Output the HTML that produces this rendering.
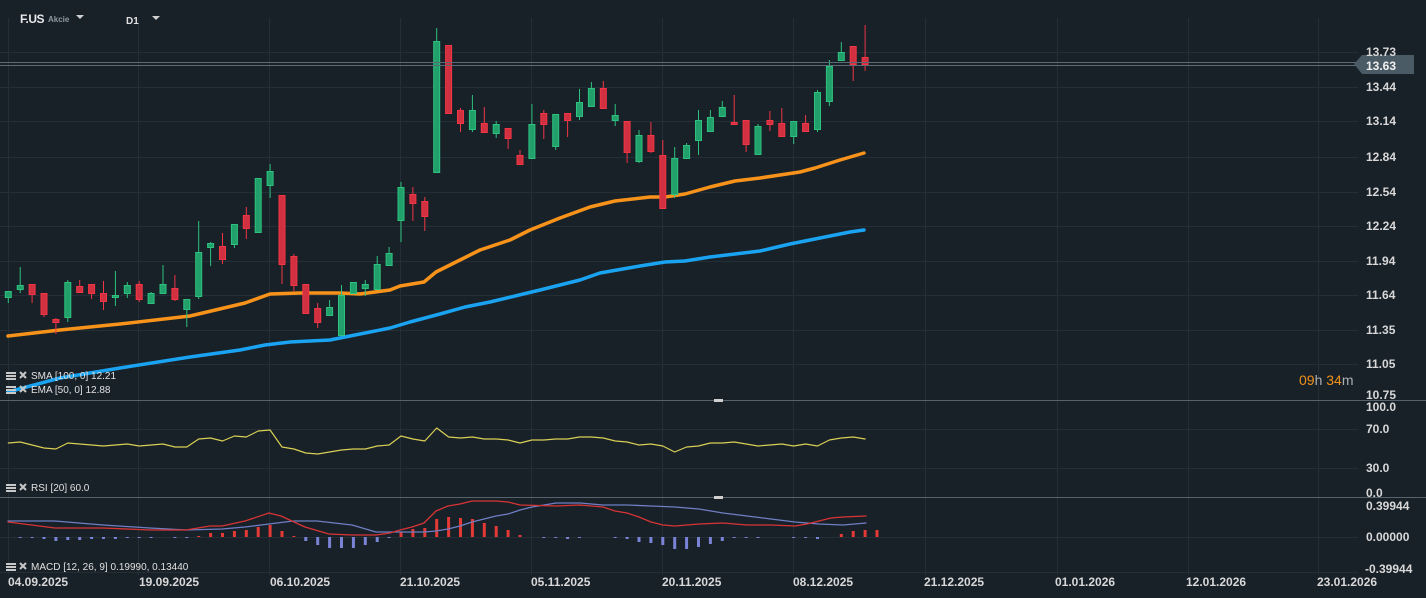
<!DOCTYPE html>
<html><head><meta charset="utf-8"><style>
html,body{margin:0;padding:0;background:#182028;width:1426px;height:598px;overflow:hidden;font-family:"Liberation Sans",Arial,sans-serif}
svg{position:absolute;left:0;top:0}
.t{font-family:"Liberation Sans",Arial,sans-serif}
</style></head><body>
<svg id="s" width="1426" height="598" viewBox="0 0 1426 598" xmlns="http://www.w3.org/2000/svg">
<rect width="1426" height="598" fill="#182028"/>
<g id="grid" stroke="#242e37" stroke-width="1"></g>
<g id="main"></g>
<!-- separators -->
<line x1="0" y1="400.5" x2="1426" y2="400.5" stroke="#56636d"/>
<line x1="0" y1="497.5" x2="1426" y2="497.5" stroke="#56636d"/>
<rect x="714" y="399" width="9" height="3" fill="#d0d0d0"/>
<rect x="714" y="496" width="9" height="3" fill="#d0d0d0"/>
<!-- current price line -->
<line x1="0" y1="62.5" x2="1356" y2="62.5" stroke="#5b6a75"/>
<line x1="0" y1="65.5" x2="1356" y2="65.5" stroke="#5b6a75"/>
<path d="M1354 64 L1362 55 L1414 55 L1414 74 L1362 74 Z" fill="#4a5b66"/>
<text x="1366" y="70" class="t" font-size="12" font-weight="bold" fill="#f0f0f0">13.63</text>
<g class="t" font-size="12" fill="#d8d8d8" font-weight="bold">
<text x="1366" y="56">13.73</text>
<text x="1366" y="91">13.44</text>
<text x="1366" y="125">13.14</text>
<text x="1366" y="161">12.84</text>
<text x="1366" y="196">12.54</text>
<text x="1366" y="230">12.24</text>
<text x="1366" y="265">11.94</text>
<text x="1366" y="299">11.64</text>
<text x="1366" y="334">11.35</text>
<text x="1366" y="368">11.05</text>
<text x="1366" y="399">10.75</text>
<text x="1366" y="411">100.0</text>
<text x="1366" y="433">70.0</text>
<text x="1366" y="472">30.0</text>
<text x="1366" y="497">0.0</text>
<text x="1366" y="510">0.39944</text>
<text x="1366" y="541">0.00000</text>
<text x="1365" y="573">-0.39944</text>
</g>
<g class="t" font-size="12" fill="#d8d8d8" font-weight="bold">
<text x="8" y="586">04.09.2025</text>
<text x="139" y="586">19.09.2025</text>
<text x="270" y="586">06.10.2025</text>
<text x="400" y="586">21.10.2025</text>
<text x="531" y="586">05.11.2025</text>
<text x="662" y="586">20.11.2025</text>
<text x="793" y="586">08.12.2025</text>
<text x="924" y="586">21.12.2025</text>
<text x="1055" y="586">01.01.2026</text>
<text x="1186" y="586">12.01.2026</text>
<text x="1317" y="586">23.01.2026</text>
</g>
<text x="1299" y="385" class="t" font-size="14"><tspan fill="#f0921a">09</tspan><tspan fill="#aab0b5">h </tspan><tspan fill="#f0921a">34</tspan><tspan fill="#aab0b5">m</tspan></text>
<!-- header -->
<text x="20" y="23" class="t" font-size="12" font-weight="bold" fill="#e8e8e8" letter-spacing="-0.5">F.US</text>
<text x="48" y="22" class="t" font-size="8" font-weight="bold" fill="#8e9aa3">Akcie</text>
<path d="M76 15 L84 15 L80 19 Z" fill="#d0d0d0"/>
<text x="126" y="24" class="t" font-size="10" font-weight="bold" fill="#e0e0e0">D1</text>
<path d="M152 16 L160 16 L156 20 Z" fill="#d0d0d0"/>
<!-- indicator labels -->
<g id="icons"></g>
<g class="t" font-size="10" fill="#e0e0e0">
<text x="31" y="379">SMA [100, 0] 12.21</text>
<text x="31" y="393">EMA [50, 0] 12.88</text>
<text x="31" y="491">RSI [20] 60.0</text>
<text x="31" y="570">MACD [12, 26, 9] 0.19990, 0.13440</text>
</g>
</svg>
<script>
var NS="http://www.w3.org/2000/svg";
function el(p,n,a){var e=document.createElementNS(NS,n);for(var k in a)e.setAttribute(k,a[k]);p.appendChild(e);return e;}
var g=document.getElementById('grid'),m=document.getElementById('main');
[52,87,121,157,192,226,261,295,330,364,429,468,537,572].forEach(function(y){el(g,'line',{x1:0,y1:y+.5,x2:1358,y2:y+.5});});
[8,138,269,400,531,662,793,925,1057,1188,1318].forEach(function(x){el(g,'line',{x1:x+.5,y1:18,x2:x+.5,y2:575});});
function X(i){return 8.3+11.9*i;}
// [bodyTop, bodyBottom, wickTop, wickBottom, green]
var C=[[291,297,291,303,1],[285,289,267,293,1],[284,294,284,303,0],[293,314,293,317,0],[319,322,318,334,0],[282,317,280,322,1],[286,292,280,293,0],[284,293,284,299,0],[293,301,281,310,0],[295,297,271,306,1],[285,293,282,298,1],[284,299,281,302,0],[293,303,292,303,1],[284,293,265,293,1],[288,299,275,301,0],[299,309,299,327,1],[252,296,221,299,1],[243,247,242,266,1],[246,259,233,264,0],[224,244,224,248,1],[215,228,207,239,0],[178,232,178,232,1],[171,185,164,198,1],[195,264,195,284,0],[256,285,254,291,0],[284,313,284,314,0],[308,322,303,328,0],[307,315,300,315,1],[295,335,285,335,1],[282,293,282,293,1],[284,288,280,296,1],[264,289,256,289,1],[253,265,247,265,1],[187,220,182,242,1],[194,203,187,221,0],[201,216,197,231,0],[41,172,28,173,1],[45,113,45,113,0],[110,123,108,132,0],[110,129,95,132,1],[123,132,107,132,0],[124,133,121,138,1],[128,138,128,149,0],[155,164,150,165,0],[124,158,104,158,1],[113,124,110,139,0],[114,146,114,150,1],[113,120,113,137,0],[102,116,89,120,1],[88,106,82,106,1],[88,108,81,108,0],[115,120,104,126,1],[121,152,121,163,0],[135,161,130,163,1],[135,151,122,153,0],[155,208,140,208,0],[158,194,147,198,1],[145,158,143,158,1],[120,140,110,155,1],[117,131,110,131,1],[107,116,101,116,1],[122,124,95,124,0],[120,144,120,152,0],[126,154,124,154,1],[120,124,111,131,0],[123,136,108,136,0],[121,136,121,144,1],[123,131,115,131,0],[92,129,90,132,1],[66,101,60,106,1],[52,60,42,60,1],[46,64,46,81,0],[57,64,25,71,0]];
function pl(p,pts,col,w){el(p,'polyline',{points:pts.map(function(a){return a.join(',')}).join(' '),fill:'none',stroke:col,'stroke-width':w,'stroke-linejoin':'round','stroke-linecap':'round'});}
pl(m,[[8,336],[60,330],[120,324],[190,316],[245,303],[270,294],[300,293],[340,293],[360,294],[390,290],[400,286],[424,282],[436,272],[460,260],[480,250],[510,240],[530,230],[560,218],[590,207],[615,201],[650,197],[665,197],[685,194],[710,187],[735,181],[760,178],[800,172],[815,168],[840,160],[864,153]],'#f7931a',3.5);
pl(m,[[8,392],[60,378],[120,368],[190,357],[240,350],[265,345],[290,342],[330,340],[350,336],[390,328],[410,322],[440,314],[465,307],[490,302],[540,290],[580,280],[600,273],[640,266],[665,262],[685,261],[710,257],[735,254],[760,251],[790,244],[820,238],[850,232],[864,230]],'#1aa3f0',3.5);
C.forEach(function(c,i){var x=X(i),col=c[4]?'#2ec27e':'#f23645',f=c[4]?'#22a06b':'#d0303f';
el(m,'line',{x1:x,y1:c[2],x2:x,y2:c[3],stroke:col,'stroke-width':1});
el(m,'rect',{x:x-3,y:c[0]+.5,width:6,height:Math.max(1,c[1]-c[0]),fill:f,stroke:col,'stroke-width':1});});
// RSI
var R=[443,442,445,448,449,443,444,445,446,445,444,446,445,444,447,447,439,438,441,436,437,431,430,447,449,453,454,452,450,449,449,446,445,436,439,441,428,437,438,437,439,439,440,443,440,440,439,439,437,437,438,441,442,445,444,446,452,447,446,443,443,442,444,446,445,444,446,444,446,440,438,437,439];
pl(m,R.map(function(y,i){return[X(i),y]}),'#d8cf55',1.2);
// MACD hist
var H=[0,-1,-1,-2,-4,-3,-3,-2,-2,-2,-1,-1,-1,0,-1,-1,1,4,4,6,7,10,12,6,1,-4,-8,-11,-11,-11,-8,-5,-1,5,8,9,18,20,19,18,14,11,7,2,0,-1,-1,-2,-1,0,0,-1,-2,-5,-6,-8,-12,-12,-10,-7,-4,-1,-1,-1,0,0,-1,-1,-2,0,3,6,7,7];
H.forEach(function(h,i){if(!h)return;var x=X(i);if(h>0)el(m,'rect',{x:x-1.5,y:537-h,width:3,height:h,fill:'#e53935'});else el(m,'rect',{x:x-1.5,y:537,width:3,height:-h,fill:'#7a84d6'});});
pl(m,[[8,521],[55,521],[103,525],[150,528],[186,530],[222,529],[245,527],[269,524],[293,521],[317,521],[352,525],[376,532],[400,532],[424,532],[436,531],[448,529],[460,526],[472,522],[484,519],[496,516],[508,514],[520,510],[532,507],[556,503],[580,503],[603,505],[627,505],[651,506],[675,507],[699,509],[723,513],[747,516],[771,519],[795,522],[819,524],[843,525],[866,523]],'#6f7fc4',1.3);
pl(m,[[8,522],[55,528],[103,528],[150,530],[186,530],[210,526],[222,526],[245,521],[269,513],[281,516],[305,527],[329,534],[352,535],[376,535],[390,533],[400,530],[412,527],[424,523],[436,511],[448,506],[460,504],[472,501],[496,501],[508,502],[520,505],[556,506],[580,505],[603,507],[615,511],[627,513],[639,517],[651,522],[663,525],[675,526],[699,524],[723,523],[747,525],[771,525],[795,526],[807,524],[819,521],[831,518],[843,517],[866,516]],'#d73535',1.3);
// icons
var ic=document.getElementById('icons');
[372,386,484,563].forEach(function(y){
el(ic,'rect',{x:6,y:y,width:10,height:2,fill:'#c8c8c8'});el(ic,'rect',{x:6,y:y+3,width:10,height:2,fill:'#c8c8c8'});el(ic,'rect',{x:6,y:y+6,width:10,height:2,fill:'#c8c8c8'});
el(ic,'path',{d:'M20 '+y+' L26 '+(y+6)+' M26 '+y+' L20 '+(y+6),stroke:'#c8c8c8','stroke-width':2});});
</script>
</body></html>
